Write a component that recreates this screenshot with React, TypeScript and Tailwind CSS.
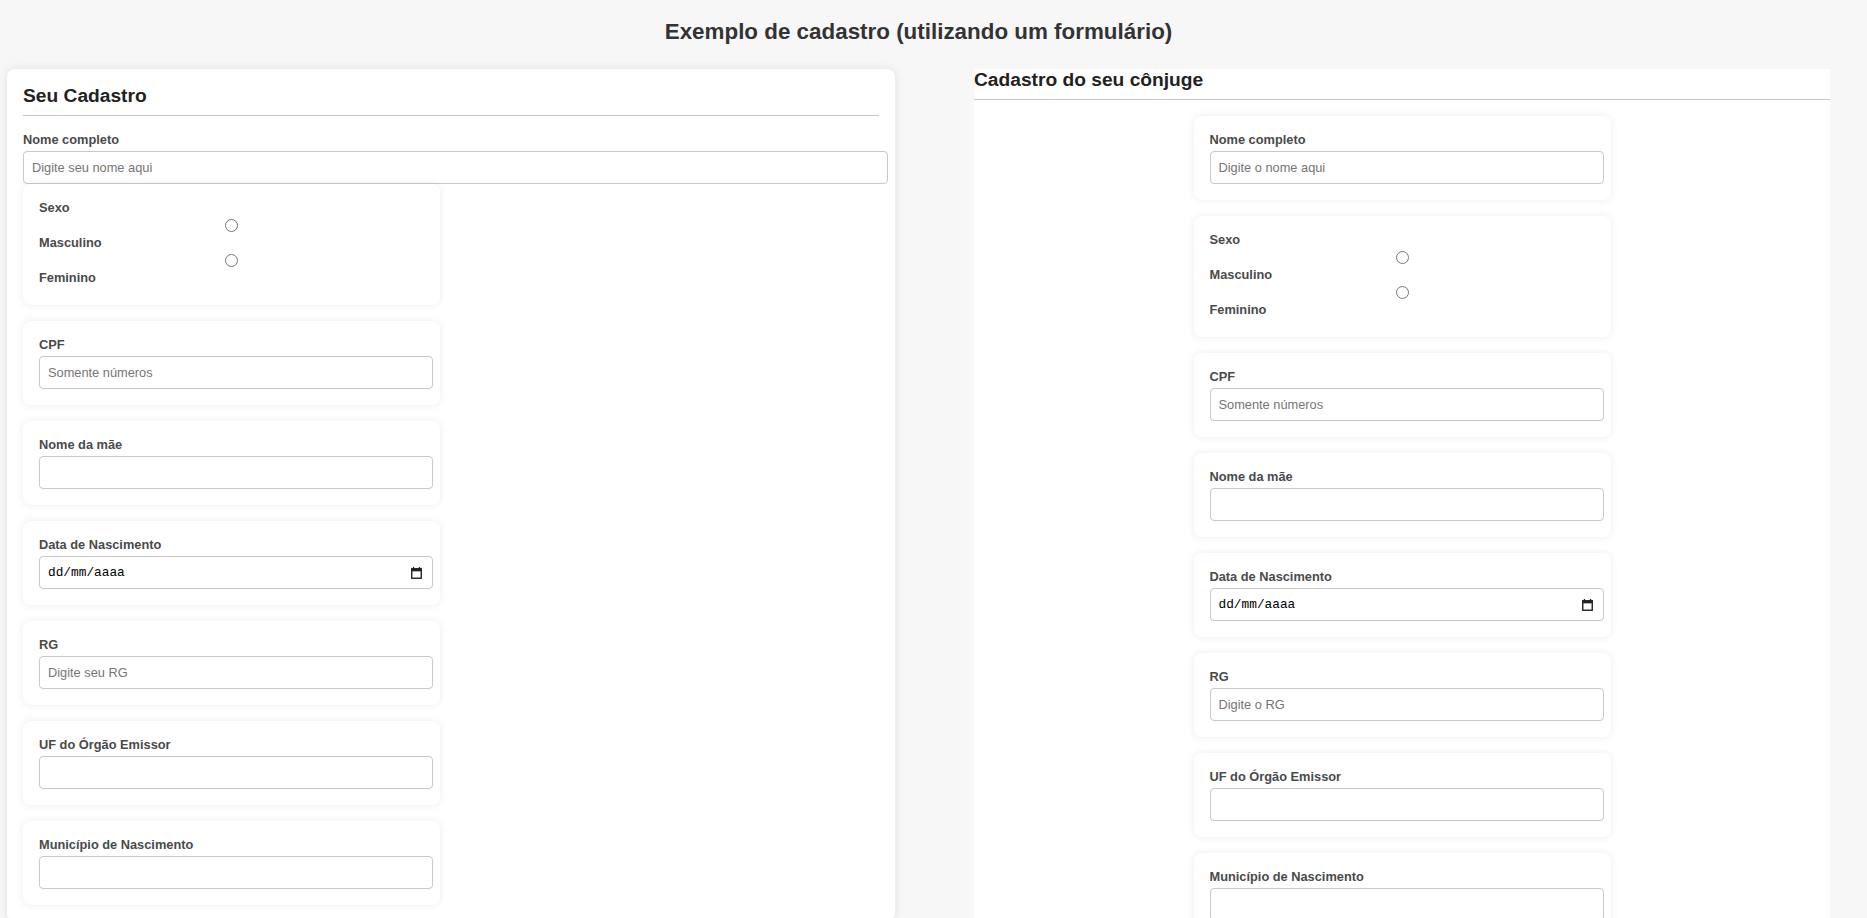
import React from "react";

const labelCls =
  "block mb-[4px] text-[12.8px] leading-[15px] font-bold text-[#4a4a4a]";
const inputCls =
  "block w-[calc(100%+9px)] h-[33px] rounded-[4px] border border-[#c8c8c8] bg-white px-2 text-[12.8px] text-[#222] placeholder:text-[#757575] outline-none";
const cardCls =
  "w-[417px] shrink-0 rounded-lg bg-white p-4 shadow-[0_0_8px_rgba(0,0,0,0.08)]";

function CalendarIcon() {
  return (
    <svg width="11" height="12" viewBox="0 0 11 12" aria-hidden="true">
      <path d="M2.5 0v2.5M8.5 0v2.5" stroke="#222" strokeWidth="1.3" />
      <rect x="0.75" y="1.75" width="9.5" height="9.5" fill="none" stroke="#222" strokeWidth="1.4" />
      <rect x="0.75" y="1.75" width="9.5" height="2.6" fill="#222" />
    </svg>
  );
}

function TextField({ label, placeholder }: { label: string; placeholder?: string }) {
  return (
    <div className={cardCls}>
      <label className={labelCls}>{label}</label>
      <input className={inputCls} placeholder={placeholder} />
    </div>
  );
}

function DateField() {
  return (
    <div className={cardCls}>
      <label className={labelCls}>Data de Nascimento</label>
      <div className="flex h-[33px] w-[calc(100%+9px)] items-center justify-between rounded-[4px] border border-[#c8c8c8] bg-white pl-2 pr-[10px]">
        <span className="font-['Liberation_Mono',monospace] text-[12.8px] text-black">dd/mm/aaaa</span>
        <CalendarIcon />
      </div>
    </div>
  );
}

function SexField({ name }: { name: string }) {
  return (
    <div className={cardCls}>
      <label className={labelCls}>Sexo</label>
      <input type="radio" name={name} className="m-0 mb-[3px] block h-[13px] w-full" />
      <label className={labelCls}>Masculino</label>
      <input type="radio" name={name} className="m-0 mb-[3px] block h-[13px] w-full" />
      <label className={labelCls}>Feminino</label>
    </div>
  );
}

export default function App() {
  return (
    <div className="h-[918px] overflow-hidden bg-[#f7f7f7] font-['Liberation_Sans',Arial,sans-serif]">
      <div className="ml-[7px] w-[1823px]">
        <h1 className="pt-[19px] text-center text-[22.4px] font-bold leading-[26px] text-[#333]">
          Exemplo de cadastro (utilizando um formulário)
        </h1>
        <div className="mt-[24px] flex items-start gap-[79px]">
          {/* Left panel */}
          <div className="w-[888px] shrink-0 rounded-lg bg-white px-4 pt-4 pb-4 shadow-[0_0_10px_rgba(0,0,0,0.1)]">
            <h2 className="mb-2 text-[19.2px] font-bold leading-[22px] text-[#222]">Seu Cadastro</h2>
            <div className="h-px bg-[#c8c8c8]" />
            <label className={labelCls + " mt-4"}>Nome completo</label>
            <input className={inputCls} placeholder="Digite seu nome aqui" />
            <div className="flex flex-col gap-4">
              <SexField name="sexo1" />
              <TextField label="CPF" placeholder="Somente números" />
              <TextField label="Nome da mãe" />
              <DateField />
              <TextField label="RG" placeholder="Digite seu RG" />
              <TextField label="UF do Órgão Emissor" />
              <TextField label="Município de Nascimento" />
            </div>
          </div>
          {/* Right panel */}
          <div className="w-[856px] shrink-0 bg-white pb-4">
            <h2 className="mb-2 text-[19.2px] font-bold leading-[22px] text-[#222]">Cadastro do seu cônjuge</h2>
            <div className="h-px bg-[#c8c8c8]" />
            <div className="flex flex-col items-center gap-4 pt-4">
              <TextField label="Nome completo" placeholder="Digite o nome aqui" />
              <SexField name="sexo2" />
              <TextField label="CPF" placeholder="Somente números" />
              <TextField label="Nome da mãe" />
              <DateField />
              <TextField label="RG" placeholder="Digite o RG" />
              <TextField label="UF do Órgão Emissor" />
              <TextField label="Município de Nascimento" />
            </div>
          </div>
        </div>
      </div>
    </div>
  );
}
